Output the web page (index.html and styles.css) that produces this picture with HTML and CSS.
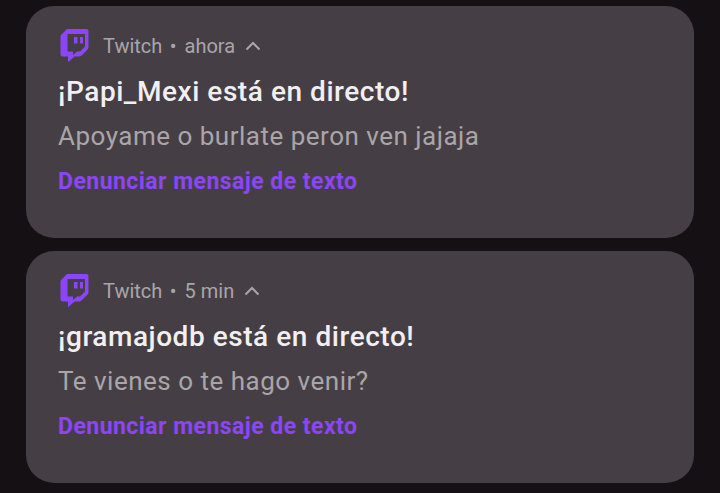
FILE: index.html
```html
<!DOCTYPE html>
<html lang="es">
<head>
    <meta charset="UTF-8">
    <meta name="viewport" content="width=device-width, initial-scale=1.0">
    <title>Notificaciones</title>
    <link rel="stylesheet" href="styles.css">
</head>
<body>
    <div class="list">
        <div class="card">
            <div class="card-head">
                <svg class="logo" viewBox="0 0 29 33"><path fill-rule="evenodd" d="M7.500 0H26.500Q28.500 0 28.500 2V18Q28.500 19.500 27.500 20.500L21.500 26.500Q20.500 27.500 19 27.500H14.500L9 32.500Q8 33.300 8 32V27.500H3Q0.500 27.500 0.500 25V7.500Q0.500 6.500 1.500 5.500L6 1Q6.500 0 7.500 0ZM7.500 5V22.500H13V26L17 22.500H20L25 17.500V5ZM14 8H17.500V14.500H14ZM20 8H23V14.500H20Z"/></svg>
                <span class="app">Twitch</span>
                <span class="dot">•</span>
                <span class="time">ahora</span>
                <svg class="chev" viewBox="0 0 16 10"><path d="M1.500 8.500L8 2L14.500 8.500"/></svg>
            </div>
            <div class="title">¡Papi_Mexi está en directo!</div>
            <div class="text">Apoyame o burlate peron ven jajaja</div>
            <div class="action">Denunciar mensaje de texto</div>
        </div>
        <div class="card">
            <div class="card-head">
                <svg class="logo" viewBox="0 0 29 33"><path fill-rule="evenodd" d="M7.500 0H26.500Q28.500 0 28.500 2V18Q28.500 19.500 27.500 20.500L21.500 26.500Q20.500 27.500 19 27.500H14.500L9 32.500Q8 33.300 8 32V27.500H3Q0.500 27.500 0.500 25V7.500Q0.500 6.500 1.500 5.500L6 1Q6.500 0 7.500 0ZM7.500 5V22.500H13V26L17 22.500H20L25 17.500V5ZM14 8H17.500V14.500H14ZM20 8H23V14.500H20Z"/></svg>
                <span class="app">Twitch</span>
                <span class="dot">•</span>
                <span class="time">5 min</span>
                <svg class="chev" viewBox="0 0 16 10"><path d="M1.500 8.500L8 2L14.500 8.500"/></svg>
            </div>
            <div class="title">¡gramajodb está en directo!</div>
            <div class="text">Te vienes o te hago venir?</div>
            <div class="action">Denunciar mensaje de texto</div>
        </div>
    </div>
</body>
</html>
```

FILE: styles.css
```css
body {
    margin: 0;
    background-color: #141014;
    font-family: Roboto, "Liberation Sans", sans-serif;
}

.list {
    display: flex;
    flex-direction: column;
    gap: 13px;
    padding: 6px 26px 10px;
}

.card {
    height: 232px;
    box-sizing: border-box;
    padding: 23px 32px 0;
    background-color: #453f45;
    border-radius: 28px;
}

.card-head {
    display: flex;
    align-items: center;
    height: 33px;
    font-size: 20px;
    color: #aaa5a9;
}

.logo {
    width: 29px;
    height: 33px;
    margin-left: 2px;
    margin-right: 14px;
    fill: #8c45f7;
}

.dot {
    margin: 0 8px 0 7.500px;
    font-size: 20px;
}

.chev {
    width: 16px;
    height: 10px;
    margin-left: 10px;
    fill: none;
    stroke: #aaa5a9;
    stroke-width: 2;
}

.title {
    margin-top: 12px;
    font-size: 28px;
    line-height: 36px;
    font-weight: 500;
    letter-spacing: 0.55px;
    color: #f2eff2;
}

.text {
    margin-top: 8px;
    font-size: 26px;
    line-height: 36px;
    letter-spacing: 0.5px;
    color: #aaa5a9;
}

.action {
    margin-top: 10px;
    font-size: 23px;
    line-height: 36px;
    font-weight: 700;
    letter-spacing: 0.46px;
    color: #8c45f7;
}
```
